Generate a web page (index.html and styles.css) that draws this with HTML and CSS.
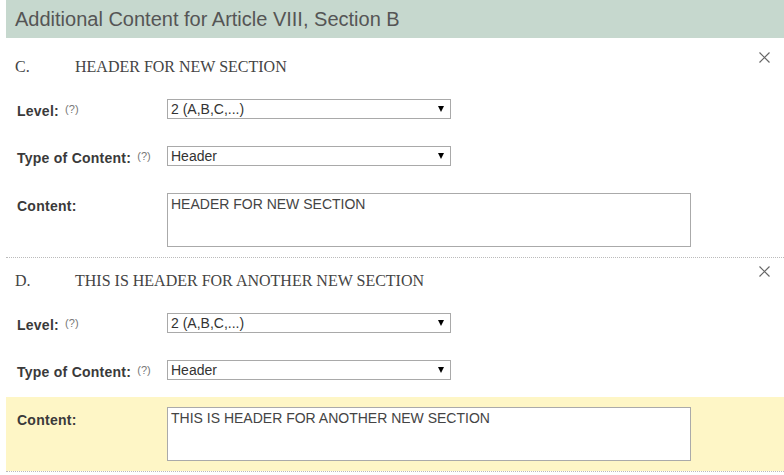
FILE: index.html
```html
<!DOCTYPE html>
<html lang="en">
  <head>
    <meta charset="UTF-8" />
    <meta name="viewport" content="width=device-width, initial-scale=1.0" />
    <link rel="stylesheet" href="styles.css">
    <title>Additional Content</title>
  </head>
  <body>
    <div class="panel">
      <h2 class="panel-title">Additional Content for Article VIII, Section B</h2>

      <div class="item">
        <div class="item-head">
          <span class="num">C.</span>
          <span class="head-text">HEADER FOR NEW SECTION</span>
          <button class="close" type="button">
            <svg width="11" height="11" viewBox="0 0 11 11"><path d="M0.5 0.5 L10.5 10.5 M10.5 0.5 L0.5 10.5" stroke="#666" stroke-width="1.2" fill="none"/></svg>
          </button>
        </div>
        <div class="row">
          <label class="lbl">Level: <span class="help">(?)</span></label>
          <span class="sel"><select><option>2 (A,B,C,...)</option></select></span>
        </div>
        <div class="row">
          <label class="lbl">Type of Content: <span class="help">(?)</span></label>
          <span class="sel"><select><option>Header</option></select></span>
        </div>
        <div class="row content-row">
          <label class="lbl">Content:</label>
          <textarea>HEADER FOR NEW SECTION</textarea>
        </div>
      </div>

      <div class="item">
        <div class="item-head">
          <span class="num">D.</span>
          <span class="head-text">THIS IS HEADER FOR ANOTHER NEW SECTION</span>
          <button class="close" type="button">
            <svg width="11" height="11" viewBox="0 0 11 11"><path d="M0.5 0.5 L10.5 10.5 M10.5 0.5 L0.5 10.5" stroke="#666" stroke-width="1.2" fill="none"/></svg>
          </button>
        </div>
        <div class="row">
          <label class="lbl">Level: <span class="help">(?)</span></label>
          <span class="sel"><select><option>2 (A,B,C,...)</option></select></span>
        </div>
        <div class="row">
          <label class="lbl">Type of Content: <span class="help">(?)</span></label>
          <span class="sel"><select><option>Header</option></select></span>
        </div>
        <div class="row content-row active">
          <label class="lbl">Content:</label>
          <textarea>THIS IS HEADER FOR ANOTHER NEW SECTION</textarea>
        </div>
      </div>
    </div>
  </body>
</html>
```

FILE: styles.css
```css
* {
  margin: 0;
  padding: 0;
  box-sizing: border-box;
}
body {
  background: #fff;
  font-family: "Liberation Sans", Arial, sans-serif;
  color: #333;
}
.panel {
  margin-left: 6px;
}
.panel-title {
  height: 38px;
  margin-bottom: 6px;
  padding: 7px 0 0 9px;
  background-color: #c6d8ce;
  color: #555;
  font-size: 20px;
  font-weight: normal;
  line-height: 24px;
}
.item {
  border-bottom: 1px dotted #bbb;
}
.item-head {
  position: relative;
  height: 45px;
  padding: 13px 0 0 9px;
  display: flex;
  font-family: "Liberation Serif", "Times New Roman", serif;
  font-size: 16px;
  line-height: 19px;
  color: #444;
}
.item-head .num {
  width: 60px;
}
.close {
  position: absolute;
  right: 14px;
  top: 8px;
  width: 11px;
  height: 11px;
  border: none;
  background: none;
  cursor: pointer;
}
.close svg {
  display: block;
}
.row {
  display: flex;
  align-items: flex-start;
  height: 47px;
  padding: 10px 0 0 11px;
}
.row .lbl {
  width: 150px;
  height: 20px;
  padding-top: 4px;
  font-size: 14px;
  font-weight: bold;
  letter-spacing: 0.25px;
  color: #3a3a3a;
  line-height: 17px;
}
.row .help {
  font-size: 11px;
  font-weight: normal;
  letter-spacing: 0;
  color: #777;
  vertical-align: 3px;
  line-height: 11px;
  margin-left: 2px;
}
.sel {
  position: relative;
  display: block;
  width: 284px;
  height: 20px;
}
.sel select {
  appearance: none;
  -webkit-appearance: none;
  width: 100%;
  height: 20px;
  border: 1px solid #a9a9a9;
  border-radius: 0;
  background: #fff;
  padding: 0 3px;
  font-family: "Liberation Sans", Arial, sans-serif;
  font-size: 14px;
  color: #333;
}
.sel::after {
  content: "";
  position: absolute;
  right: 7px;
  top: 7px;
  border-left: 3.5px solid transparent;
  border-right: 3.5px solid transparent;
  border-top: 6px solid #000;
  pointer-events: none;
}
.content-row {
  height: 74px;
  padding: 10px 0 0 11px;
}
.content-row .lbl {
  padding-top: 5px;
}
.content-row textarea {
  width: 524px;
  height: 54px;
  border: 1px solid #aaa;
  padding: 2px 3px;
  resize: none;
  font-family: "Liberation Sans", Arial, sans-serif;
  font-size: 14px;
  line-height: 16px;
  color: #444;
}
.active {
  background-color: #fef6c6;
}
```
